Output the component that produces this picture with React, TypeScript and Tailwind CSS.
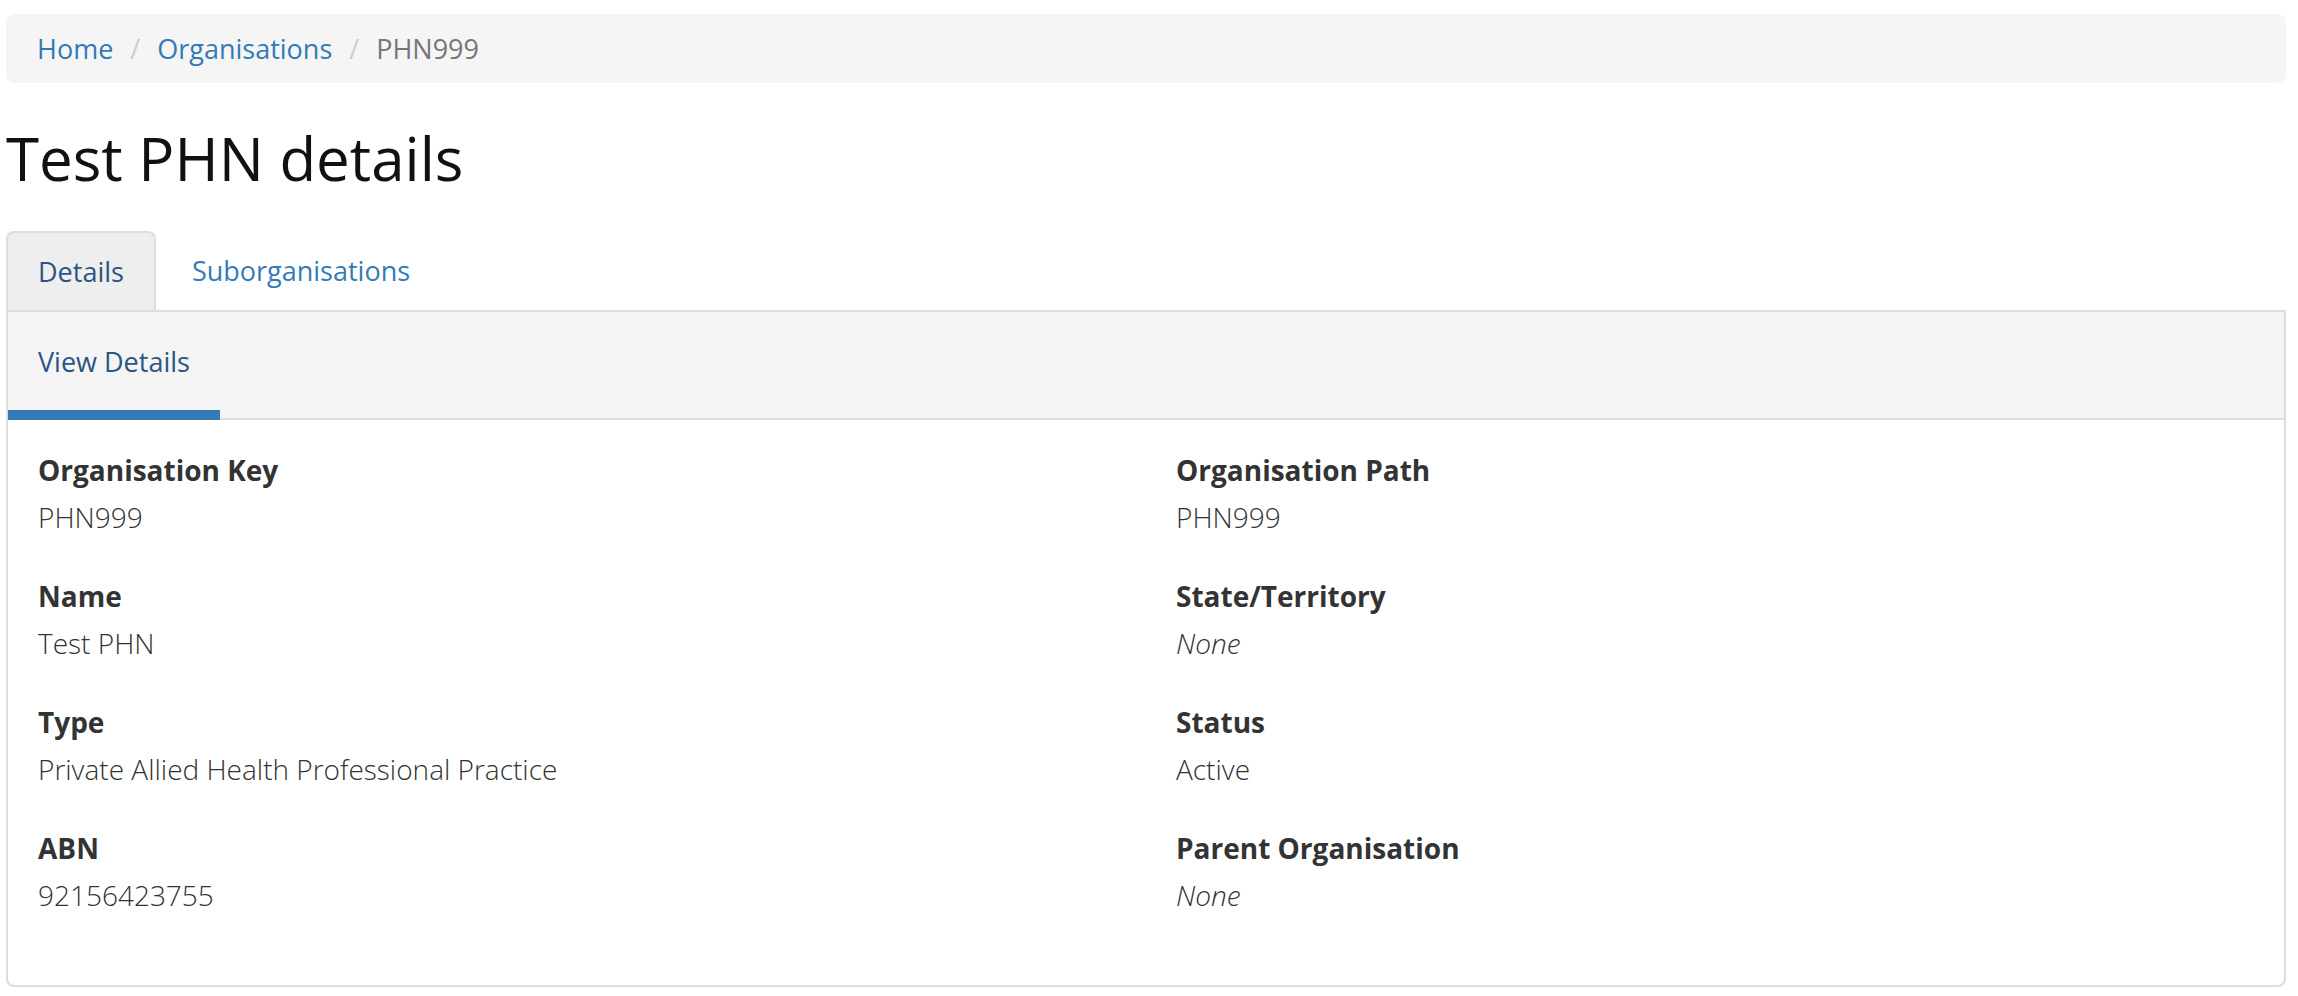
import React from "react";

type Field = {
  label: string;
  value: string;
  empty?: boolean;
};

const LEFT: Field[] = [
  { label: "Organisation Key", value: "PHN999" },
  { label: "Name", value: "Test PHN" },
  { label: "Type", value: "Private Allied Health Professional Practice" },
  { label: "ABN", value: "92156423755" },
];

const RIGHT: Field[] = [
  { label: "Organisation Path", value: "PHN999" },
  { label: "State/Territory", value: "None", empty: true },
  { label: "Status", value: "Active" },
  { label: "Parent Organisation", value: "None", empty: true },
];

function FieldList(props: { fields: Field[] }) {
  return (
    <dl className="pl-[30px]">
      {props.fields.map((f) => (
        <div key={f.label} className="mb-[39px]">
          <dt className="text-[28px] font-bold leading-[40px] text-[#333]">{f.label}</dt>
          <dd
            className={
              "mt-[7px] text-[28px] font-light leading-[40px] text-[#333] " + (f.empty ? "italic" : "")
            }
          >
            {f.value}
          </dd>
        </div>
      ))}
    </dl>
  );
}

export default function App() {
  return (
    <div className="min-h-screen bg-white pl-[6px] pr-[12px] pt-[14px] font-['Open_Sans',sans-serif]">
      <nav className="flex h-[69px] items-center rounded-[8px] bg-[#f5f5f5] px-[31px] text-[27px] leading-[40px]">
        <a className="text-[#337ab7]">Home</a>
        <span className="px-[17px] text-[#ccc]">/</span>
        <a className="text-[#337ab7]">Organisations</a>
        <span className="px-[17px] text-[#ccc]">/</span>
        <span className="text-[#777]">PHN999</span>
      </nav>

      <h1 className="mt-[42px] text-[60px] font-normal leading-[66px] text-[#111]">Test PHN details</h1>

      <div className="mt-[40px] flex h-[79px] items-stretch text-[27px] leading-[40px]">
        <div className="flex items-center rounded-t-[8px] border-2 border-b-0 border-[#ddd] bg-[#eee] px-[30px] text-[#2b5582]">
          Details
        </div>
        <div className="ml-[4px] flex items-center border-2 border-transparent px-[30px] text-[#337ab7]">
          Suborganisations
        </div>
      </div>

      <div className="rounded-b-[8px] border-2 border-[#ddd]">
        <div className="flex border-b-2 border-[#ddd] bg-[#f4f4f4] text-[27px] leading-[40px]">
          <div className="-mb-[2px] border-b-[10px] border-[#337ab7] px-[30px] pb-[28px] pt-[30px] text-[#2b5582]">
            View Details
          </div>
        </div>
        <div className="grid grid-cols-2 pb-[31px] pt-[30px]">
          <FieldList fields={LEFT} />
          <FieldList fields={RIGHT} />
        </div>
      </div>
    </div>
  );
}
